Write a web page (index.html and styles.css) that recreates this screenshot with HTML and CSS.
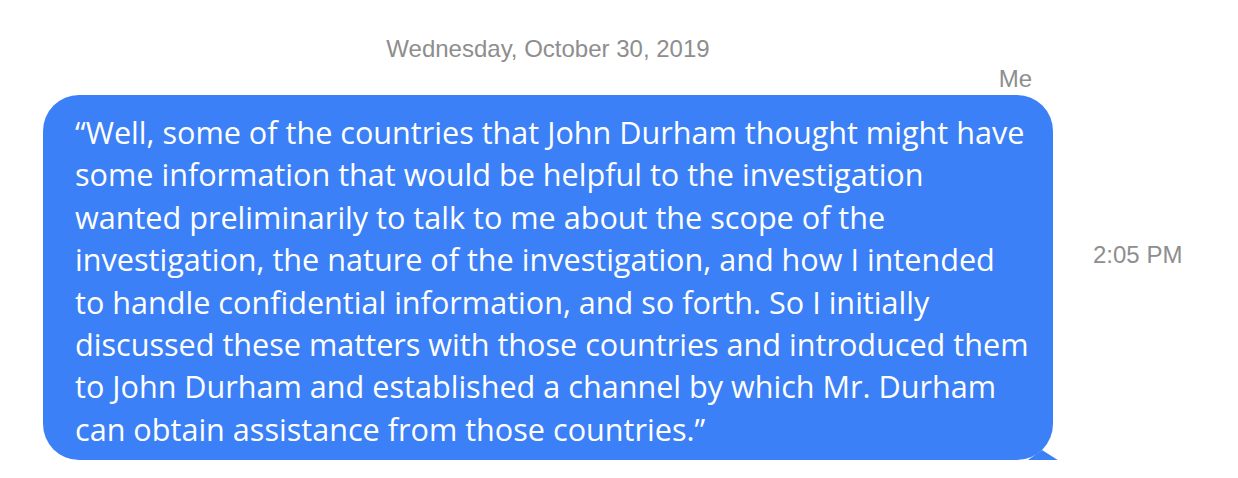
FILE: index.html
```html
<!DOCTYPE html>
<html lang="en">
<head>
    <meta charset="UTF-8">
    <meta name="viewport" content="width=device-width, initial-scale=1.0">
    <title>Messages</title>
    <link rel="stylesheet" href="styles.css">
</head>
<body>
    <div class="thread">
        <div class="day">Wednesday, October 30, 2019</div>
        <div class="sender">Me</div>
        <div class="row">
            <div class="bubble">
                <p class="bubble-text">“Well, some of the countries that John Durham thought might have some information that would be helpful to the investigation wanted preliminarily to talk to me about the scope of the investigation, the nature of the investigation, and how I intended to handle confidential information, and so forth. So I initially discussed these matters with those countries and introduced them to John Durham and established a channel by which Mr. Durham can obtain assistance from those countries.”</p>
                <svg class="tail" width="40" height="24" viewBox="0 0 40 24">
                    <path d="M0 13 L14 3 L36 17 L35 20.5 Z" fill="#3b80f6"/>
                </svg>
            </div>
            <div class="time">2:05 PM</div>
        </div>
    </div>
</body>
</html>
```

FILE: styles.css
```css
body {
    margin: 0;
    background-color: #fff;
    font-family: 'Liberation Sans', Arial, sans-serif;
}

.thread {
    padding: 35px 0 0 43px;
}

.day {
    width: 1010px;
    text-align: center;
    font-size: 24px;
    line-height: 28px;
    color: #8e8e8e;
}

.sender {
    width: 1010px;
    margin-top: 2px;
    padding-right: 21px;
    box-sizing: border-box;
    text-align: right;
    font-size: 24px;
    line-height: 28px;
    color: #8e8e8e;
}

.row {
    display: flex;
    align-items: center;
    margin-top: 2px;
}

.bubble {
    position: relative;
    width: 1010px;
    height: 365px;
    box-sizing: border-box;
    padding: 16px 23px 0 32px;
    background-color: #3b80f6;
    border-radius: 36px;
}

.bubble-text {
    margin: 0;
    font-family: 'Open Sans', 'Noto Sans', sans-serif;
    font-size: 30.6px;
    line-height: 42.4px;
    color: #fff;
}

.tail {
    position: absolute;
    left: 985px;
    top: 352px;
}

.time {
    margin: 0 0 46px 40px;
    font-size: 24px;
    line-height: 28px;
    color: #8e8e8e;
}
```
